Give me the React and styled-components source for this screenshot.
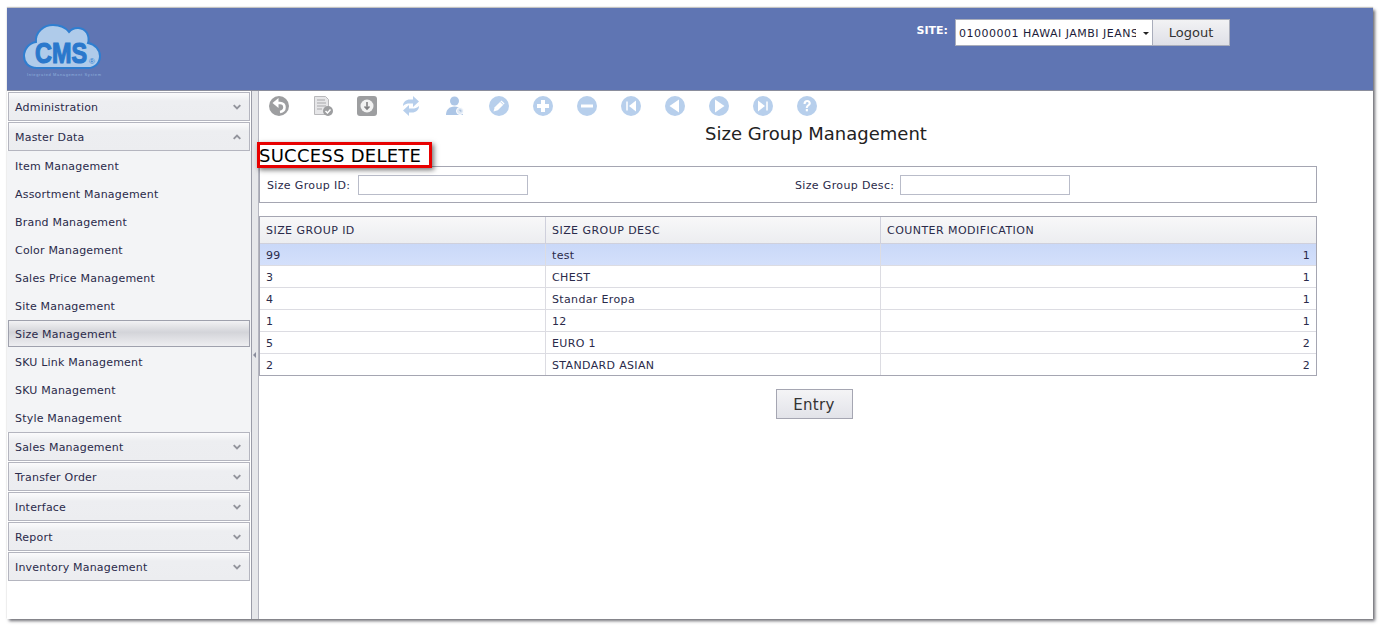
import React from "react"
import styled, { createGlobalStyle } from "styled-components"

const Global = createGlobalStyle`
  html {
    height: 100%;
    overflow: hidden;
  }

  body {
    box-sizing: border-box;
    height: 100%;
    margin: 0;
    padding: 8px 0 0 7px;
    background: #fff;
    font-family: "DejaVu Sans", Verdana, sans-serif;
  }
`

const Frame = styled.div`
  box-sizing: border-box;
  width: 1366px;
  height: 611px;
  background: #fff;
  box-shadow: 2px 2px 3px rgba(60, 60, 70, 0.75), 0 -1px 1px rgba(120, 120, 120, 0.4);
  display: flex;
  flex-direction: column;
`

const Header = styled.header`
  box-sizing: border-box;
  height: 83px;
  flex: none;
  background: #5f75b3;
  border-bottom: 1px solid #8a8d9c;
  display: flex;
  justify-content: space-between;
  padding: 11px 143px 0 16px;
`

const Site = styled.div`
  display: flex;
  align-items: flex-start;
`

const SiteLabel = styled.label`
  color: #fff;
  font-size: 11px;
  font-weight: bold;
  margin: 5px 7px 0 0;
`

const SiteSelect = styled.div`
  box-sizing: border-box;
  width: 197px;
  height: 27px;
  background: #fff;
  border: 1px solid #a9adbb;
  border-right: none;
  font-size: 11px;
  letter-spacing: 0.5px;
  color: #1c1c3a;
  padding: 2px 0 0 3px;
  display: flex;
  align-items: center;
  position: relative;
  white-space: nowrap;

  span {
    display: block;
    width: 177px;
    overflow: hidden;
  }

  &::after {
    content: "";
    position: absolute;
    right: 3px;
    top: 12px;
    border: 3.5px solid transparent;
    border-top: 3.5px solid #222;
    border-bottom: none;
  }
`

const LogoutButton = styled.button`
  box-sizing: border-box;
  width: 78px;
  height: 27px;
  font-family: inherit;
  font-size: 13px;
  color: #333;
  border: 1px solid #a9adbb;
  background: linear-gradient(#f2f2f4, #dfe0e7);
  padding: 0;
`

const Body = styled.div`
  flex: 1;
  display: flex;
  min-height: 0;
`

const Sidebar = styled.nav`
  box-sizing: border-box;
  width: 245px;
  flex: none;
  border-right: 1px solid #9a9ca8;
  padding: 1px 1px 0 1px;
  display: flex;
  flex-direction: column;
  gap: 1px;
`

const Group = styled.div`
  box-sizing: border-box;
  height: 29px;
  flex: none;
  width: 242px;
  border: 1px solid #b4b5bf;
  background: linear-gradient(#fbfbfc 0, #edeef1 30%, #ecedf0 100%);
  display: flex;
  justify-content: space-between;
  align-items: center;
  padding: 0 8px 0 6px;
  font-size: 11px;
  letter-spacing: 0.2px;
  color: #2a2a4a;
`

const GroupLabel = styled.span`
  margin-top: 2px;
`

const SubList = styled.div`
  margin: -1px;
  width: 244px;
  background: #f3f4f6;
  padding-top: 1px;
`

const SubItem = styled.div`
  box-sizing: border-box;
  height: ${({ $active }) => ($active ? "27px" : "28px")};
  margin: ${({ $active }) => ($active ? "0 1px 1px 1px" : "0 0 0 1px")};
  padding-left: ${({ $active }) => ($active ? "6px" : "7px")};
  padding-top: ${({ $active }) => ($active ? "2px" : "0")};
  width: ${({ $active }) => ($active ? "242px" : "auto")};
  display: flex;
  align-items: center;
  font-size: 11px;
  letter-spacing: 0.2px;
  color: #2a2a4a;
  ${({ $active }) =>
    $active &&
    `
    border: 1px solid #9fa1ad;
    background: linear-gradient(#f2f2f4, #d3d4d9 45%, #eeeef1);
  `}
`

const Splitter = styled.div`
  box-sizing: border-box;
  width: 7px;
  flex: none;
  background: #e6e7ea;
  border-right: 1px solid #b4b5bf;
  position: relative;

  &::after {
    content: "";
    position: absolute;
    left: 1px;
    top: 261px;
    border: 3px solid transparent;
    border-right: 3px solid #8a8d9c;
    border-left: none;
  }
`

const Main = styled.main`
  flex: 1;
  min-width: 0;
  display: flex;
  flex-direction: column;
  padding-right: 56px;
`

const Toolbar = styled.div`
  height: 30px;
  display: flex;
  align-items: center;
  padding-left: 10px;
  gap: 24px;
  flex: none;
`

const Icon = styled.svg`
  width: 20px;
  height: 20px;
  flex: none;
  display: block;
`

const Title = styled.h1`
  margin: 1px 0 0;
  height: 24px;
  line-height: 24px;
  text-align: center;
  font-size: 18px;
  font-weight: normal;
  color: #222;
  padding-left: 56px;
`

const Alert = styled.div`
  box-sizing: border-box;
  align-self: flex-start;
  position: relative;
  z-index: 1;
  height: 26px;
  width: 175px;
  margin-left: -2px;
  margin-top: -4px;
  border: 3px solid #e80000;
  box-shadow: 2px 2px 5px rgba(0, 0, 0, 0.55);
  font-size: 18px;
  letter-spacing: 0.25px;
  line-height: 22px;
  text-indent: -1px;
  color: #000;
  white-space: nowrap;
`

const Filter = styled.div`
  box-sizing: border-box;
  height: 37px;
  margin-top: -2px;
  border: 1px solid #a5a6b2;
  display: flex;
  align-items: center;
  padding-left: 7px;
  font-size: 11px;
  letter-spacing: 0.35px;
  color: #2a2a4a;
`

const FilterField = styled.div`
  display: flex;
  align-items: center;
  width: ${({ $width }) => $width}px;
`

const FilterLabel = styled.label`
  width: ${({ $width }) => $width}px;
  margin-top: 2px;
`

const FilterInput = styled.input`
  box-sizing: border-box;
  width: 170px;
  height: 20px;
  margin: 0;
  background: #fff;
  border: 1px solid #b9bcc9;
`

const Grid = styled.table`
  box-sizing: border-box;
  width: 1058px;
  margin-top: 13px;
  border: 1px solid #a5a6b2;
  border-collapse: separate;
  border-spacing: 0;
  table-layout: fixed;
  font-size: 11px;
  color: #2a2a4a;
`

const HeadCell = styled.th`
  box-sizing: border-box;
  height: 27px;
  padding: 0 6px;
  font-weight: normal;
  letter-spacing: 0.45px;
  text-align: left;
  background: linear-gradient(#f8f8f9, #ecedf0);
  border-bottom: 1px solid #cfd0dc;
  border-right: 1px solid #cfd0dc;

  &:last-child {
    border-right: none;
  }
`

const Cell = styled.td`
  box-sizing: border-box;
  height: 22px;
  padding: 1px 6px 0;
  letter-spacing: 0.35px;
  text-align: ${({ $num }) => ($num ? "right" : "left")};
  border-bottom: 1px solid #dcdce2;
  border-right: 1px solid #dcdce2;
  background: ${({ $selected }) => ($selected ? "linear-gradient(#c9d8f8, #d4e0fb)" : "#fff")};

  &:last-child {
    border-right: none;
  }

  tr:last-child & {
    height: 21px;
    border-bottom: none;
  }
`

const Actions = styled.div`
  display: flex;
  justify-content: center;
  margin-top: 13px;
  padding-left: 52px;
`

const EntryButton = styled.button`
  box-sizing: border-box;
  width: 77px;
  height: 30px;
  font-family: inherit;
  font-size: 15px;
  letter-spacing: 0.3px;
  color: #333;
  border: 1px solid #a5a6b2;
  background: linear-gradient(#f4f4f6, #e2e3e9);
  padding: 2px 0 0;
`

const Chevron = ({ up }) => (
  <svg width="8" height="6" viewBox="0 0 8 6">
    <path
      d={up ? "M.7 4.800 4 1.500 7.300 4.800" : "M.7 1.200 4 4.500 7.300 1.200"}
      fill="none"
      stroke="#92949c"
      strokeWidth="1.900"
    />
  </svg>
)

const Logo = () => (
  <svg width="80" height="62" viewBox="0 0 80 62" style={{ display: "block" }}>
    <path
      d="M14 49C5 49 1 43 1 37C1 30 6 24 13 23C12 13 21 6 30 6C37 6 43 9 46 13C51 7 60 8 64 14C66 18 66 21 65 24C72 25 77 31 77 37C77 44 72 49 65 49Z"
      fill="#afcbea"
      stroke="#2f7ed0"
      strokeWidth="2"
    />
    <text
      x="12"
      y="44"
      textLength="52"
      lengthAdjust="spacingAndGlyphs"
      fontFamily="'Liberation Sans',sans-serif"
      fontWeight="bold"
      fontSize="29"
      fill="#2a78cc"
      stroke="#2a78cc"
      strokeWidth="1.200"
    >
      CMS
    </text>
    <text x="66" y="45" fontFamily="'Liberation Sans',sans-serif" fontSize="8" fill="#2a78cc">
      ®
    </text>
    <text
      x="4"
      y="57"
      textLength="74"
      fontFamily="'Liberation Sans',sans-serif"
      fontSize="4"
      fill="#8fb0dc"
    >
      Integrated Management System
    </text>
  </svg>
)

const GRAY = "#9d9ea0"
const BLUE = "#b7cfec"

const Round = ({ color = BLUE, children }) => (
  <Icon viewBox="0 0 20 20">
    <circle cx="10" cy="10" r="10" fill={color} />
    {children}
  </Icon>
)

const toolbarIcons = [
  <Round key="back" color={GRAY}>
    <path d="M8 7h3c3 0 4.500 2 4.500 4.200S14 15.500 11 16" fill="none" stroke="#fff" strokeWidth="2.600" />
    <path d="M9.500 2 3.500 7l6 5z" fill="#fff" />
  </Round>,
  <Icon key="report" viewBox="0 0 20 20">
    <path d="M1.500.5h11l3 3v15h-14z" fill="#e6e6e8" stroke="#b8b8bb" />
    <path d="M4 4h8M4 7h9M4 10h9M4 13h5" stroke="#a8a8ab" />
    <circle cx="15" cy="15" r="5" fill={GRAY} />
    <path d="M12.500 15l2 2 3-3.500" fill="none" stroke="#fff" strokeWidth="1.500" />
  </Icon>,
  <Icon key="save" viewBox="0 0 20 20">
    <rect width="20" height="20" rx="3" fill={GRAY} />
    <circle cx="10" cy="10" r="6.500" fill="#f2f2f2" />
    <path d="M10 6v7M7.500 10.500 10 13l2.500-2.500" fill="none" stroke="#808082" strokeWidth="1.600" />
  </Icon>,
  <Icon key="refresh" viewBox="0 0 20 20">
    <path d="M2 10c0-4 3-6.500 7-6.500h3V0l6 5.500-6 5.500V7.500H9C6 7.500 4 8 2 10z" fill={BLUE} />
    <path d="M18 10c0 4-3 6.500-7 6.500H8V20l-6-5.500L8 9v3.500h3c3 0 5-.5 7-2.500z" fill={BLUE} />
  </Icon>,
  <Icon key="user" viewBox="0 0 20 20">
    <circle cx="9.500" cy="5" r="4.500" fill="#adc6e6" />
    <path d="M1 19c0-5 3-8.500 8.500-8.500S18 14 18 19z" fill="#adc6e6" />
    <circle cx="15" cy="15" r="3.500" fill="#dde7f4" stroke="#fff" />
    <path d="M15 13.500V15h1.500" fill="none" stroke="#9db6d6" />
  </Icon>,
  <Round key="edit">
    <path d="M4.500 15.500l1.200-4.300 6.800-6.800 3.100 3.100-6.800 6.800z" fill="#fff" />
    <path d="M11.300 5.600l3.100 3.100" stroke={BLUE} />
  </Round>,
  <Round key="add">
    <path d="M4 10h12M10 4v12" stroke="#fff" strokeWidth="4" />
  </Round>,
  <Round key="remove">
    <path d="M4 10h12" stroke="#fff" strokeWidth="3" />
  </Round>,
  <Round key="first">
    <path d="M6 5.500v9" stroke="#fff" strokeWidth="1.500" />
    <path d="M15 4.500v11L8 10z" fill="#fff" />
  </Round>,
  <Round key="prev">
    <path d="M14 3.500v13L4.500 10z" fill="#fff" />
  </Round>,
  <Round key="next">
    <path d="M6 3.500v13L15.500 10z" fill="#fff" />
  </Round>,
  <Round key="last">
    <path d="M14 5.500v9" stroke="#fff" strokeWidth="1.500" />
    <path d="M5 4.500v11L12 10z" fill="#fff" />
  </Round>,
  <Round key="help">
    <path
      d="M6.500 8c0-2.500 1.500-4 3.700-4s3.600 1.300 3.600 3.300c0 2.600-3 2.500-3 4.700H8.800c0-3 2.800-3.200 2.800-4.700 0-.8-.6-1.300-1.400-1.300-1 0-1.500.7-1.500 2z"
      fill="#fff"
    />
    <rect x="8.800" y="13" width="2.100" height="2.300" fill="#fff" />
  </Round>,
]

const masterItems = [
  "Item Management",
  "Assortment Management",
  "Brand Management",
  "Color Management",
  "Sales Price Management",
  "Site Management",
  "Size Management",
  "SKU Link Management",
  "SKU Management",
  "Style Management",
]

const lowerGroups = ["Sales Management", "Transfer Order", "Interface", "Report", "Inventory Management"]

const rows = [
  ["99", "test", 1],
  ["3", "CHEST", 1],
  ["4", "Standar Eropa", 1],
  ["1", "12", 1],
  ["5", "EURO 1", 2],
  ["2", "STANDARD ASIAN", 2],
]

const App = () => (
  <Frame>
    <Global />
    <Header>
      <Logo />
      <Site>
        <SiteLabel>SITE:</SiteLabel>
        <SiteSelect>
          <span>01000001 HAWAI JAMBI JEANS</span>
        </SiteSelect>
        <LogoutButton>Logout</LogoutButton>
      </Site>
    </Header>
    <Body>
      <Sidebar>
        <Group>
          <GroupLabel>Administration</GroupLabel>
          <Chevron />
        </Group>
        <Group>
          <GroupLabel>Master Data</GroupLabel>
          <Chevron up />
        </Group>
        <SubList>
          {masterItems.map((item) => (
            <SubItem key={item} $active={item === "Size Management"}>
              {item}
            </SubItem>
          ))}
        </SubList>
        {lowerGroups.map((name) => (
          <Group key={name}>
            <GroupLabel>{name}</GroupLabel>
            <Chevron />
          </Group>
        ))}
      </Sidebar>
      <Splitter />
      <Main>
        <Toolbar>{toolbarIcons}</Toolbar>
        <Title>Size Group Management</Title>
        <Alert>SUCCESS DELETE</Alert>
        <Filter>
          <FilterField $width={528}>
            <FilterLabel $width={91}>Size Group ID:</FilterLabel>
            <FilterInput />
          </FilterField>
          <FilterField>
            <FilterLabel $width={105}>Size Group Desc:</FilterLabel>
            <FilterInput />
          </FilterField>
        </Filter>
        <Grid>
          <colgroup>
            <col width="286" />
            <col width="335" />
            <col />
          </colgroup>
          <thead>
            <tr>
              <HeadCell>SIZE GROUP ID</HeadCell>
              <HeadCell>SIZE GROUP DESC</HeadCell>
              <HeadCell>COUNTER MODIFICATION</HeadCell>
            </tr>
          </thead>
          <tbody>
            {rows.map(([id, desc, count], i) => (
              <tr key={id}>
                <Cell $selected={i === 0}>{id}</Cell>
                <Cell $selected={i === 0}>{desc}</Cell>
                <Cell $selected={i === 0} $num>
                  {count}
                </Cell>
              </tr>
            ))}
          </tbody>
        </Grid>
        <Actions>
          <EntryButton>Entry</EntryButton>
        </Actions>
      </Main>
    </Body>
  </Frame>
)

export default App
